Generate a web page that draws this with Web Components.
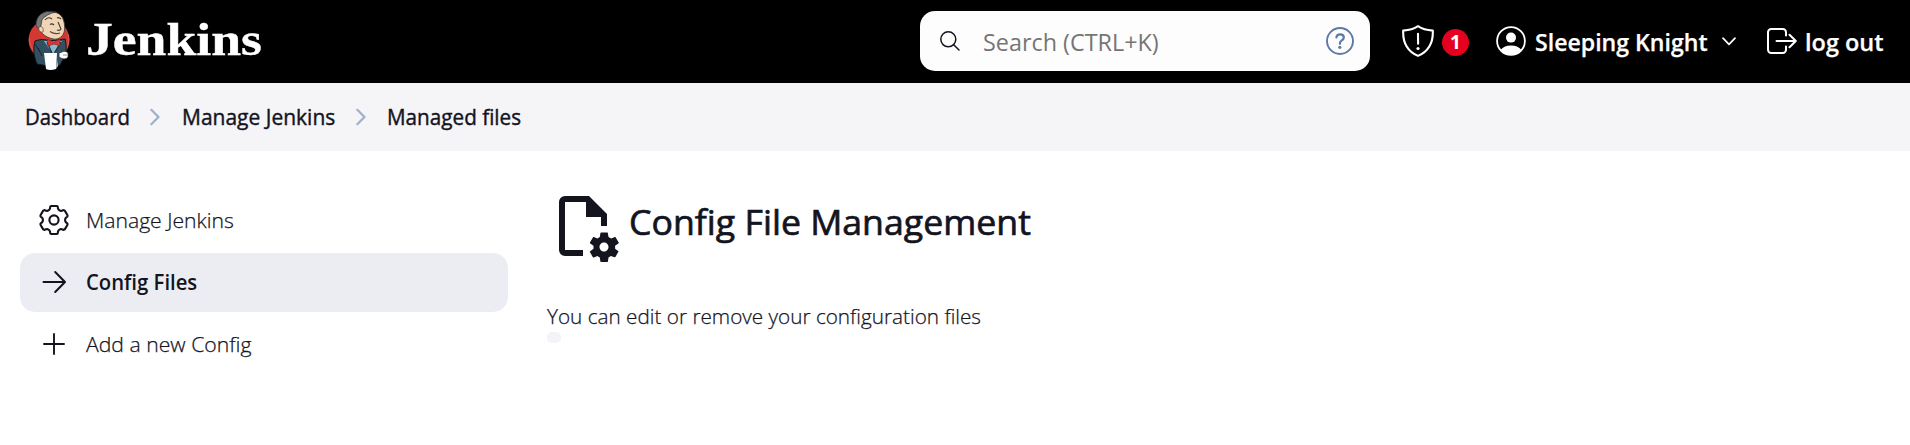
<!DOCTYPE html>
<html lang="en"><head><meta charset="utf-8"><title>Config File Management [Jenkins]</title>
<style>html,body{margin:0;background:#fff;color:#14141f;font-family:"Open Sans","Noto Sans",sans-serif;height:445px;overflow:hidden}</style></head>
<body><jk-page></jk-page>
<script>
const define=(name,html,init)=>customElements.define(name,class extends HTMLElement{
  connectedCallback(){
    if(this.shadowRoot)return;
    const t=document.createElement('template');t.innerHTML=html;
    this.attachShadow({mode:'open'}).append(t.content.cloneNode(true));
    if(init)init(this,this.shadowRoot);
  }});

/* One line of text condensed or widened to a given advance width. */
define('fit-text','<style>:host{display:block;flex:none;white-space:nowrap}span{display:inline-block;transform-origin:0 50%}</style><span><slot></slot></span>',(h,r)=>{
  const w=+h.getAttribute('w'),s=r.querySelector('span');
  h.style.width=w+'px';
  s.style.transform='scaleX('+w/s.offsetWidth+')';
});

const gear=(()=>{
  const p=[];
  for(let i=0;i<6;i++)for(const [a,q] of [[-19,12.2],[-15.5,13.9],[-11,14.3],[11,14.3],[15.5,13.9],[19,12.2],[25,11.2],[35,11.2]]){
    const t=(i*60+a-90)*Math.PI/180;p.push((15+q*Math.cos(t)).toFixed(2)+' '+(15+q*Math.sin(t)).toFixed(2));
  }
  return 'M'+p.join('L')+'Z';
})();
const icons={
  search:[20,20,'<g fill="none" stroke="#14141f" stroke-width="1.5" stroke-linecap="round"><circle cx="8.3" cy="8.3" r="7.5"/><path d="M13.7 13.7l5.3 5.3"/></g>'],
  help:[28,28,'<circle cx="14" cy="14" r="13" fill="none" stroke="#5b7ba6" stroke-width="1.9"/><path d="M10.4 10.3c.3-2 1.8-2.9 3.7-2.9 2 0 3.7 1.2 3.7 3.1 0 1.500-.9 2.200-2 2.900-1.200.8-1.900 1.400-1.900 2.900v.5" fill="none" stroke="#5b7ba6" stroke-width="2.2" stroke-linecap="round"/><circle cx="13.800" cy="20.300" r="1.600" fill="#5b7ba6"/>'],
  shield:[32,32,'<g fill="none" stroke="#fff" stroke-width="2.100" stroke-linejoin="round" stroke-linecap="round"><path d="M16 1.200C12.500 3.600 6 5.300 1.200 5.600C.6 19 6 26.500 16 30.900C26 26.500 31.400 19 30.800 5.600C26 5.300 19.500 3.600 16 1.200Z"/><path d="M16 8.700l.1 10"/></g><circle cx="16" cy="23.500" r="1.600" fill="#fff"/>'],
  person:[30,30,'<circle cx="15" cy="15" r="13.900" fill="none" stroke="#fff" stroke-width="1.800"/><circle cx="15" cy="11.600" r="5" fill="#fff"/><path d="M4.500 24C7 20.800 10.700 19.400 15 19.400S23 20.800 25.500 24C23 27 19.500 29 15 29S7 27 4.500 24Z" fill="#fff"/>'],
  down:[14,9,'<path d="M1 1.200l6 6.200 6-6.200" fill="none" stroke="#fff" stroke-width="1.700" stroke-linecap="round" stroke-linejoin="round"/>'],
  logout:[30,26,'<g fill="none" stroke="#fff" stroke-width="2" stroke-linecap="round" stroke-linejoin="round"><path d="M19 7.500V4.200A3.200 3.200 0 0 0 15.800 1H4.200A3.200 3.200 0 0 0 1 4.200V21.800A3.200 3.200 0 0 0 4.200 25H15.800A3.200 3.200 0 0 0 19 21.800V18.500M9.500 13H28.600M22.500 6.700L28.800 13L22.500 19.300"/></g>'],
  crumb:[10,18,'<path d="M1.300 1.800L8.500 9L1.300 16.200" fill="none" stroke="#9cb0cc" stroke-width="2.2" stroke-linecap="round" stroke-linejoin="round"/>'],
  gear:[30,30,'<g fill="none" stroke="#14141f" stroke-width="2.1" stroke-linejoin="round"><path d="'+gear+'"/><circle cx="15" cy="15" r="4.600"/></g>'],
  arrow:[30,30,'<path d="M4.500 15H25.500M16.200 5L26 15L16.200 25" fill="none" stroke="#14141f" stroke-width="2" stroke-linecap="round" stroke-linejoin="round"/>'],
  plus:[30,30,'<path d="M15 5V25M5 15H25" fill="none" stroke="#14141f" stroke-width="1.900" stroke-linecap="round"/>'],
  file:[24,24,'<path fill="#14141f" d="M6 2a2 2 0 0 0-2 2v16a2 2 0 0 0 2 2h6v-2H6V4h7v5h5v3h2V8l-6-6zM23.800 20.400C23.900 20.400 23.900 20.500 23.800 20.600L22.800 22.300C22.700 22.400 22.600 22.400 22.500 22.400L21.300 22C21 22.200 20.800 22.300 20.500 22.500L20.300 23.800C20.300 23.900 20.200 24 20.100 24H18.100C18 24 17.900 23.900 17.800 23.800L17.600 22.500C17.300 22.400 17 22.200 16.800 22L15.600 22.500C15.500 22.500 15.400 22.500 15.300 22.400L14.300 20.700C14.200 20.600 14.300 20.500 14.400 20.400L15.500 19.600V18.600L14.400 17.800C14.300 17.700 14.300 17.600 14.300 17.500L15.300 15.800C15.400 15.700 15.500 15.700 15.600 15.700L16.800 16.200C17.100 16 17.300 15.900 17.600 15.700L17.800 14.400C17.800 14.300 17.900 14.200 18.100 14.200H20.100C20.200 14.200 20.300 14.300 20.300 14.400L20.500 15.700C20.800 15.800 21.100 16 21.400 16.200L22.600 15.700C22.700 15.700 22.900 15.700 22.900 15.800L23.900 17.500C24 17.600 23.900 17.700 23.800 17.800L22.700 18.600V19.600L23.800 20.400M20.500 19C20.500 18.200 19.800 17.500 19 17.500S17.500 18.200 17.500 19 18.200 20.500 19 20.500 20.500 19.800 20.500 19Z"/>',72,72],
  butler:[44,62,`<circle cx="22" cy="30" r="20.500" fill="#d33833"/><path d="M2.500 28A20 20 0 0 0 8 42M41 24A20 20 0 0 1 38 41" fill="none" stroke="#e8615a" stroke-width=".8"/>
<path d="M8 31C14 29 18 29 22 31L38 29C40 36 39 41 38.500 45L33 55L27 57L10 54C6.500 45 6 38 8 31Z" fill="#335061" stroke="#101820" stroke-width="1"/>
<path d="M17 31L26 44L35 31Z" fill="#8fb7ce"/><path d="M20 32L25 43M34 32L28 42" stroke="#1d303c" stroke-width="1.200"/>
<path d="M11 38L15 46M8 34L13 42" stroke="#19262f" stroke-width="1"/>
<path d="M12 14C13 4 22 .5 29 2.500C37 5 38 14 37.500 20C37 26 32 30 26 29C18 27 12 23 12 14Z" fill="#f0d6b7" stroke="#4a4038" stroke-width=".9"/>
<path d="M9 15C9 8 13 3 20 1.500L29 2C23 3 18 6 15 9.500L14 15L13 19C11 18 9 17 9 15Z" fill="#777" stroke="#353535" stroke-width=".8"/>
<path d="M12 17C15 15 17 19 16 22C13 23 11 20 12 17Z" fill="#f0d6b7" stroke="#49433e" stroke-width=".7"/>
<path d="M18 10Q21 6 25 9M30 8Q32 7 34 9M23 14.500Q25 13 27 15M31 12L34 19Q33 21 30 20" fill="none" stroke="#3d3935" stroke-width="1.100"/>
<path d="M23 21.500Q28 25 33 23" fill="none" stroke="#59483d" stroke-width="1.200"/>
<path d="M20 29L27 32L33 29V36L27 34L21 36Z" fill="#d33833" stroke="#841a17" stroke-width=".6"/>
<path d="M17 43H30L29 59Q23 61 19 59Z" fill="#fff"/><path d="M30 50L31 56L29 59" fill="#c9d0d5"/>
<path d="M32 43L35 42C37 41 39 41 41 43L41 47C39 50 35 49 32 47Z" fill="#fff" stroke="#333" stroke-width=".8"/><path d="M36 45H40" stroke="#666" stroke-width=".7"/>`]
};
define('jk-icon','<style>:host{display:block;flex:none}svg{display:block}</style>',(h,r)=>{
  const [w,ht,body,W=w,H=ht]=icons[h.getAttribute('name')];
  r.innerHTML+=`<svg width="${W}" height="${H}" viewBox="0 0 ${w} ${ht}" aria-hidden="true">${body}</svg>`;
});

define('jk-search',`<style>:host{display:flex;box-sizing:border-box;align-items:center;flex:none;width:450px;height:60px;border-radius:15px;background:#fdfdfd;padding:0 16px 0 20px;color:#757575;font-size:23.5px;line-height:60px;font-weight:400}
fit-text{margin:2px 0 0 22.500px}.help{margin-left:auto}</style><jk-icon name="search"></jk-icon><fit-text w="176">Search (CTRL+K)</fit-text><jk-icon class="help" name="help"></jk-icon>`);

define('jk-header',`<style>:host{display:flex;box-sizing:border-box;height:83px;padding:0 0 1px 26.500px;align-items:center;background:#000;color:#fff;font-size:23.5px;line-height:60px;font-weight:600}
.brand{font:bold 46px/60px "Liberation Serif",serif;margin:0 0 3px 15px;-webkit-text-stroke:.4px #fff}
jk-search{margin-left:auto}
.badge{width:27px;height:27px;border-radius:50%;background:#e6001f;font-size:19px;line-height:27px;text-align:center;font-weight:700;margin:2px 0 0 8px}
.t{margin-top:2px;-webkit-text-stroke:.25px #fff}
.right{display:flex;align-items:center;width:508px;margin-left:32px}</style>
<jk-icon name="butler"></jk-icon><fit-text class="brand" w="176">Jenkins</fit-text>
<jk-search></jk-search>
<div class="right"><jk-icon name="shield"></jk-icon><div class="badge">1</div>
<jk-icon name="person" style="margin-left:27px"></jk-icon><fit-text class="t" w="173" style="margin-left:8.500px">Sleeping Knight</fit-text>
<jk-icon name="down" style="margin-left:14.500px"></jk-icon>
<jk-icon name="logout" style="margin-left:30.500px"></jk-icon><fit-text class="t" w="79" style="margin-left:8.500px">log out</fit-text></div>`);

define('jk-crumbs',`<style>:host{display:flex;box-sizing:border-box;height:68px;padding-left:25px;align-items:center;background:#f5f5f8;font-size:21px;line-height:68px;font-weight:400;-webkit-text-stroke:.4px #14141f}
</style><fit-text w="104.500">Dashboard</fit-text><jk-icon name="crumb" style="margin:0 22px 0 20.500px"></jk-icon><fit-text w="153">Manage Jenkins</fit-text><jk-icon name="crumb" style="margin:0 21.500px 0 20.500px"></jk-icon><fit-text w="134">Managed files</fit-text>`);

define('jk-task',`<style>:host{display:flex;box-sizing:border-box;align-items:center;height:59px;padding-left:18.500px;gap:17px;border-radius:15px;font-size:21px;line-height:59px;font-weight:300;-webkit-text-stroke:.25px #14141f}
:host([active]){background:#ecedf3;font-weight:600;-webkit-text-stroke:0}</style><slot></slot>`);

define('jk-page',`<style>:host{display:block}
.body{display:grid;grid-template-columns:488px 1fr;column-gap:39px;padding:40px 20px 0}
nav{display:grid;gap:3px;align-content:start}
jk-icon{margin-top:-1px}
.head{display:flex;align-items:center;height:72px;margin-top:-1px}
.head jk-icon{margin:0}
h1{margin:0 0 0 9.500px;font-size:35.500px;line-height:72px;font-weight:400;-webkit-text-stroke:.7px #14141f}
h1 fit-text{margin-top:-11px}
.intro{font-size:21px;line-height:30px;font-weight:300;-webkit-text-stroke:.25px #14141f;margin-top:39px}
.pill{width:14px;height:11px;border-radius:5px;background:#f3f3f8;margin-top:1px}</style>
<jk-header></jk-header><jk-crumbs></jk-crumbs>
<div class="body"><nav>
<jk-task><jk-icon name="gear"></jk-icon><fit-text w="148">Manage Jenkins</fit-text></jk-task>
<jk-task active><jk-icon name="arrow"></jk-icon><fit-text w="111">Config Files</fit-text></jk-task>
<jk-task><jk-icon name="plus"></jk-icon><fit-text w="165.500">Add a new Config</fit-text></jk-task></nav>
<main><div class="head"><jk-icon name="file"></jk-icon><h1><fit-text w="402">Config File Management</fit-text></h1></div>
<div class="intro"><fit-text w="434">You can edit or remove your configuration files</fit-text></div><div class="pill"></div></main></div>`);
</script></body></html>
